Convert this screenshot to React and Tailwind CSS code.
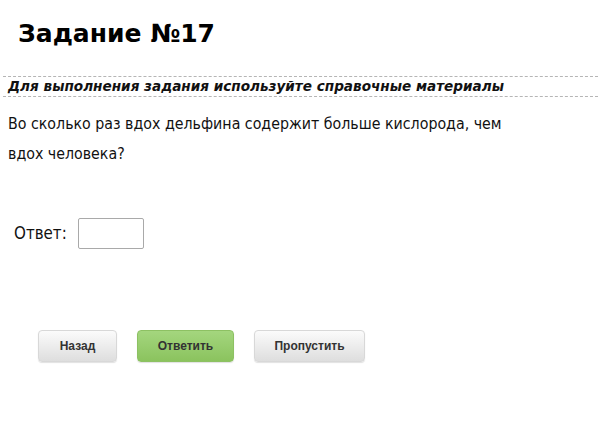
export default function App() {
  return (
    <div className="w-[598px] h-[442px] bg-white text-black font-['DejaVu_Sans',Verdana,sans-serif]">
      <h1 className="pl-[18px] pt-[19px] text-[25px] leading-[30px] font-bold">Задание №17</h1>

      <div className="mt-[27px] ml-[3px] pl-[5px] border-y border-dashed border-[#b5b5b5] py-[3px]">
        <p className="text-[13.6px] leading-[13px] font-bold italic text-[#111]">
          Для выполнения задания используйте справочные материалы
        </p>
      </div>

      <p className="ml-[8px] mt-[12px] w-[580px] font-['DejaVu_Sans_Condensed','DejaVu_Sans',sans-serif] text-[15.8px] leading-[30px] text-[#111]">
        Во сколько раз вдох дельфина содержит больше кислорода, чем
        <br />
        вдох человека?
      </p>

      <div className="mt-[49px] ml-[14px] flex items-center gap-[11px]">
        <span className="font-['DejaVu_Sans_Condensed','DejaVu_Sans',sans-serif] text-[16.8px] text-[#111]">Ответ:</span>
        <input
          type="text"
          className="w-[66px] h-[31px] border border-[#a9a9a9] rounded-[2px] outline-none"
        />
      </div>

      <div className="mt-[81px] ml-[38px] flex gap-[20px] font-['Liberation_Sans',Arial,sans-serif] text-[12px] font-bold text-[#333]">
        <button
          type="button"
          className="w-[79px] h-[32px] rounded-[4px] border border-[#d8d8d8] bg-gradient-to-b from-[#fbfbfb] to-[#dedede] shadow-[0_1px_1px_rgba(0,0,0,0.12)]"
        >
          Назад
        </button>
        <button
          type="button"
          className="w-[97px] h-[32px] rounded-[4px] border border-[#8dc163] bg-gradient-to-b from-[#a4d67e] to-[#8bc35e] shadow-[0_1px_1px_rgba(0,0,0,0.12)]"
        >
          Ответить
        </button>
        <button
          type="button"
          className="w-[111px] h-[32px] rounded-[4px] border border-[#d8d8d8] bg-gradient-to-b from-[#fbfbfb] to-[#dedede] shadow-[0_1px_1px_rgba(0,0,0,0.12)]"
        >
          Пропустить
        </button>
      </div>
    </div>
  );
}
